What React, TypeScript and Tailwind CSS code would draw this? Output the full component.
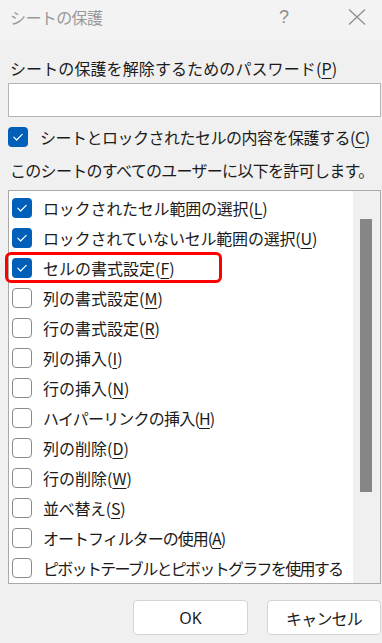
import React from "react";

const font = { fontFamily: '"Noto Sans CJK JP", "Noto Sans", sans-serif' };

function Check({ checked, className = "" }: { checked: boolean; className?: string }) {
  return checked ? (
    <div className={"w-[20px] h-[20px] rounded-[4px] bg-[#005fb8] flex items-center justify-center shrink-0 " + className}>
      <svg width="20" height="20" viewBox="0 0 20 20">
        <path d="M5.8 10.2 L8.6 13 L14.2 7.4" fill="none" stroke="#ffffff" strokeWidth="1.2" strokeLinecap="round" strokeLinejoin="round" />
      </svg>
    </div>
  ) : (
    <div className={"w-[20px] h-[20px] rounded-[4px] bg-white border border-[#8b8b8b] shrink-0 " + className} />
  );
}

type Row = { text: string; key?: string; checked?: boolean; tr: string };
const rows: Row[] = [
  { text: "ロックされたセル範囲の選択", key: "L", checked: true, tr: "tracking-[-0.2px]" },
  { text: "ロックされていないセル範囲の選択", key: "U", checked: true, tr: "tracking-[-0.2px]" },
  { text: "セルの書式設定", key: "F", checked: true, tr: "tracking-[0px]" },
  { text: "列の書式設定", key: "M", tr: "tracking-[0px]" },
  { text: "行の書式設定", key: "R", tr: "tracking-[0px]" },
  { text: "列の挿入", key: "I", tr: "tracking-[0px]" },
  { text: "行の挿入", key: "N", tr: "tracking-[0px]" },
  { text: "ハイパーリンクの挿入", key: "H", tr: "tracking-[-0.8px]" },
  { text: "列の削除", key: "D", tr: "tracking-[0px]" },
  { text: "行の削除", key: "W", tr: "tracking-[0px]" },
  { text: "並べ替え", key: "S", tr: "tracking-[-0.3px]" },
  { text: "オートフィルターの使用", key: "A", tr: "tracking-[-1px]" },
  { text: "ピボットテーブルとピボットグラフを使用する", tr: "tracking-[-1.7px]" },
];

export default function App() {
  return (
    <div className="relative w-[382px] h-[643px] bg-[#f0f0f0] overflow-hidden text-[#1b1b1b]" style={font}>
      {/* title bar */}
      <div className="h-[40px] bg-[#f3f3f3] flex items-center pl-[10px]">
        <div className="text-[16px] leading-[20px] text-[#999999] tracking-[-0.6px] mt-[-6px]">シートの保護</div>
        <div className="ml-auto text-[18px] leading-[20px] text-[#8c8c8c] mt-[-6px] mr-[59px]" style={{ fontFamily: '"Liberation Sans", sans-serif', fontWeight: 300 }}>?</div>
        <svg width="18" height="16" viewBox="0 0 18 16" className="mr-[16px] mt-[-6px]">
          <path d="M1 0.5 L17 15.5 M17 0.5 L1 15.5" stroke="#8c8c8c" strokeWidth="1.2" />
        </svg>
      </div>

      <div className="pl-[8px] pr-[1px]">
        <div className="pt-[16px] pl-[2px] text-[16px] leading-[24px] tracking-[0.1px]">
          シートの保護を解除するためのパスワード(<span className="underline underline-offset-[3px]">P</span>)
        </div>
        <div className="mt-[3px] h-[34px] bg-white border border-[#b4b4b4]" />

        <div className="mt-[10px] h-[20px] flex items-center">
          <Check checked />
          <div className="ml-[12px] text-[16px] leading-[20px] tracking-[-0.5px]">
            シートとロックされたセルの内容を保護する(<span className="underline underline-offset-[3px]">C</span>)
          </div>
        </div>

        <div className="mt-[11px] pl-[2px] text-[16px] leading-[24px] tracking-[-0.7px]">
          このシートのすべてのユーザーに以下を許可します。
        </div>

        <div className="mt-[8px] h-[394px] bg-white border border-[#a9a9a9] flex">
          <div className="flex-1 pt-[2px] pl-[3px]">
            {rows.map((r, i) => (
              <div key={i} className="h-[30px] flex items-center">
                <Check checked={!!r.checked} />
                <div className={"ml-[11px] text-[16px] leading-[20px] whitespace-nowrap " + r.tr}>
                  {r.text}
                  {r.key && (
                    <>
                      (<span className="underline underline-offset-[3px]">{r.key}</span>)
                    </>
                  )}
                </div>
              </div>
            ))}
          </div>
          <div className="w-[27px] bg-[#f0f0f0] pt-[28px] pl-[7px]">
            <div className="w-[12px] h-[273px] bg-[#868686]" />
          </div>
        </div>

        <div className="mt-[16px] flex justify-end gap-[19px]">
          <div className="w-[115px] h-[35px] bg-white border border-[#d4d4d4] rounded-[4px] flex items-center justify-center text-[16px]" style={{ fontFamily: '"Noto Sans", sans-serif' }}>
            OK
          </div>
          <div className="w-[114px] h-[35px] bg-white border border-[#d4d4d4] rounded-[4px] flex items-center justify-center text-[16px] tracking-[-0.8px]">
            キャンセル
          </div>
        </div>
      </div>

      {/* red annotation */}
      <div className="absolute left-[5px] top-[252px] w-[217px] h-[31px] border-[3px] border-[#ff0000] rounded-[6px]" />
    </div>
  );
}
